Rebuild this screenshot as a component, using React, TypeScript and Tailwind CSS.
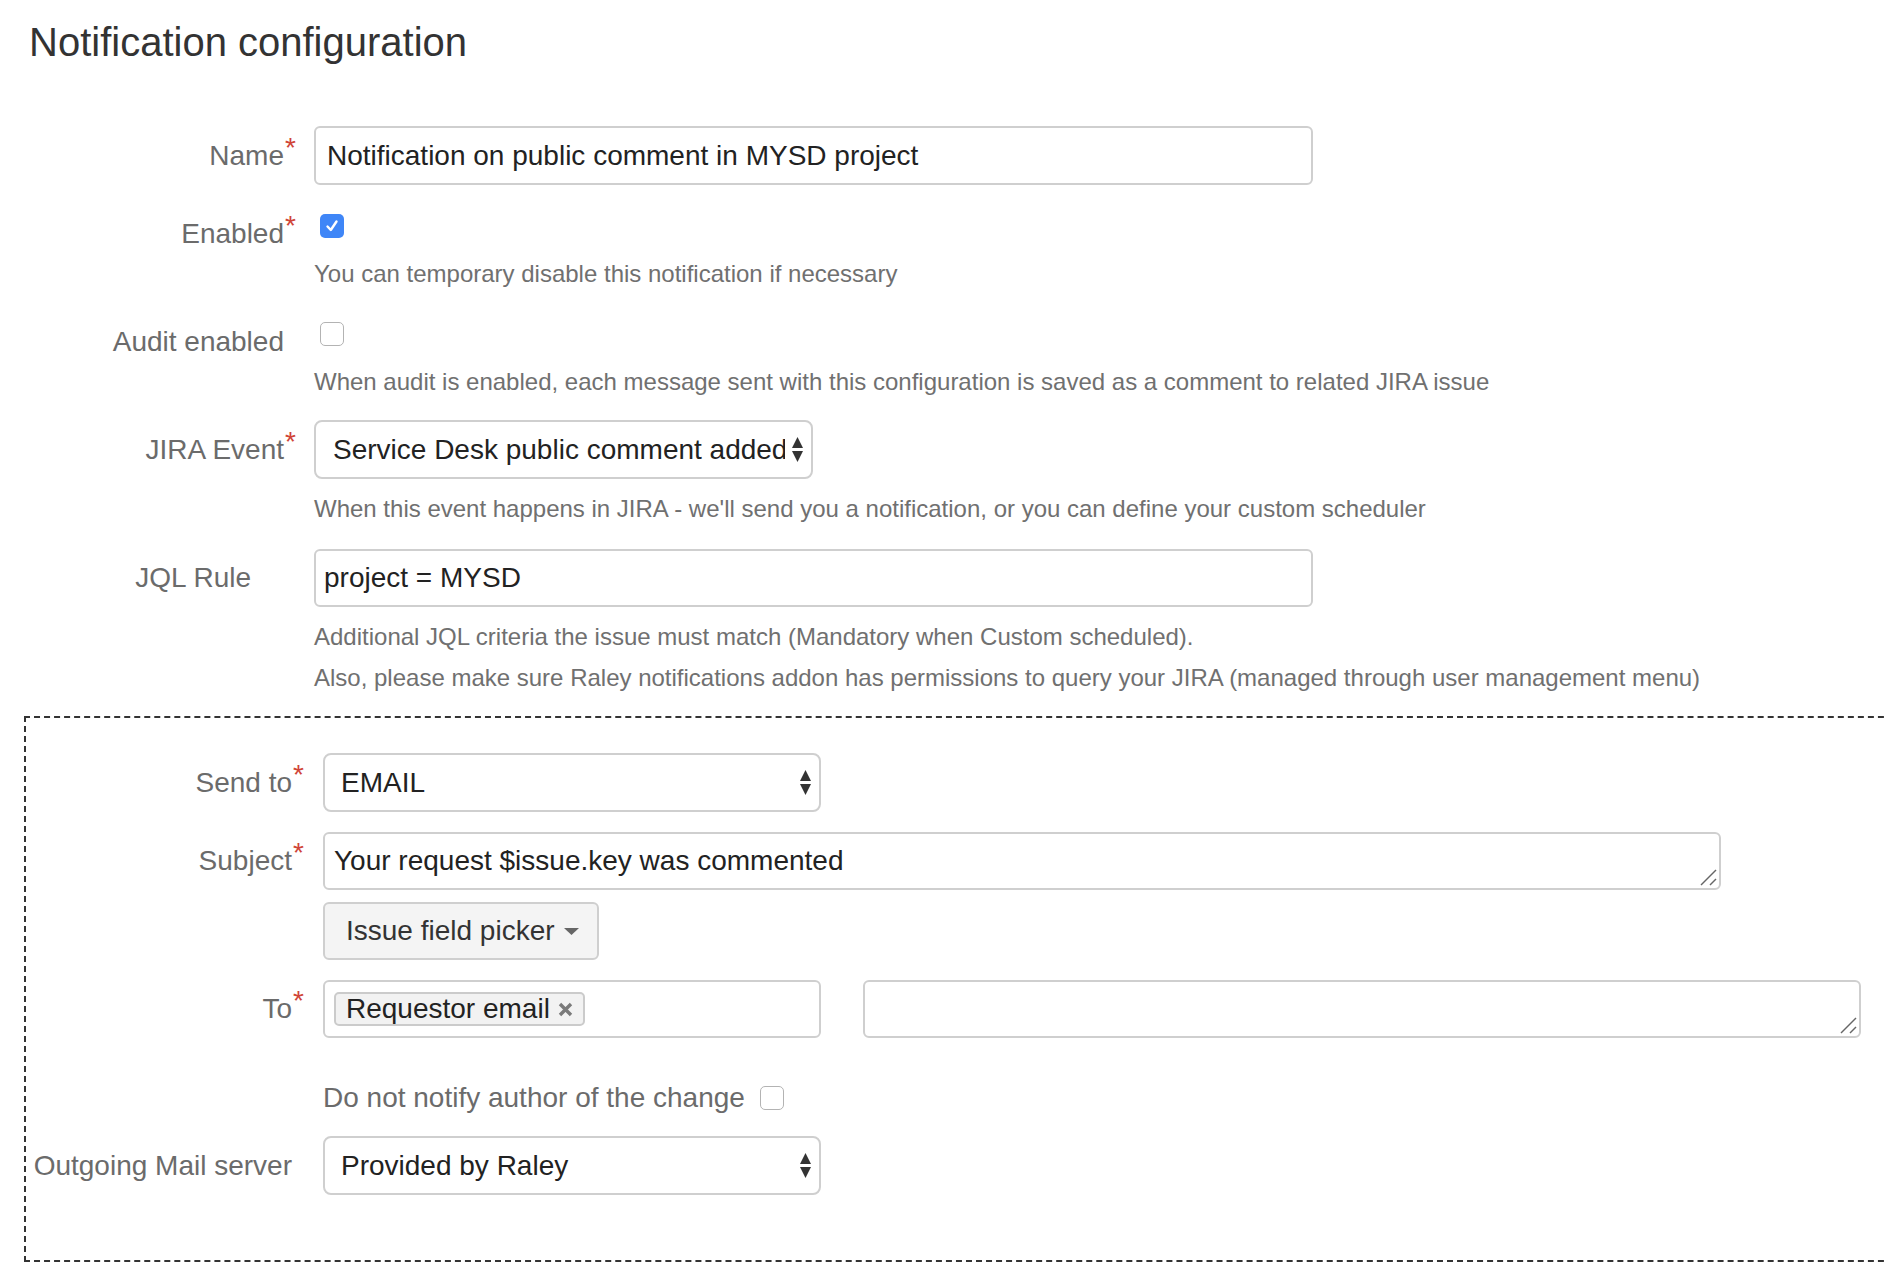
import React from "react";

function Asterisk() {
  return (
    <span className="absolute left-full top-[-5px] ml-[1px] text-[28px] leading-none text-[#d04437]">*</span>
  );
}

function Label({
  children,
  required,
  width,
  extra = "",
}: {
  children: React.ReactNode;
  required?: boolean;
  width: string;
  extra?: string;
}) {
  return (
    <div className={`${width} shrink-0 flex justify-end ${extra}`}>
      <span className="relative inline-block text-[28px] leading-[34px] text-[#6b6b6b] whitespace-nowrap">
        {children}
        {required && <Asterisk />}
      </span>
    </div>
  );
}

function Help({ children, extra = "" }: { children: React.ReactNode; extra?: string }) {
  return <div className={`text-[24px] leading-[34px] text-[#707070] whitespace-nowrap ${extra}`}>{children}</div>;
}

function SelectArrows() {
  return (
    <svg width="11" height="25" viewBox="0 0 11 25" className="shrink-0">
      <polygon points="0,11 5.5,0 11,11" fill="#333" />
      <polygon points="0,14 11,14 5.5,25" fill="#333" />
    </svg>
  );
}

function Select({
  value,
  width,
  padLeft,
  textWidth = "flex-1",
}: {
  value: string;
  width: string;
  padLeft: string;
  textWidth?: string;
}) {
  return (
    <div
      className={`${width} h-[59px] shrink-0 border-2 border-[#cfcfcf] rounded-[8px] bg-white flex items-center ${padLeft} pr-[8px]`}
    >
      <div className={`${textWidth} overflow-hidden whitespace-nowrap text-[28px] leading-[34px] text-[#222]`}>{value}</div>
      <div className="ml-auto flex">
        <SelectArrows />
      </div>
    </div>
  );
}

function ResizeHandle() {
  return (
    <svg width="18" height="18" viewBox="0 0 18 18" className="absolute right-[1px] bottom-[1px]">
      <line x1="1" y1="16" x2="16" y2="1" stroke="#666" strokeWidth="1.5" />
      <line x1="10" y1="16" x2="16" y2="10" stroke="#666" strokeWidth="1.5" />
    </svg>
  );
}

function Checkbox({ checked }: { checked?: boolean }) {
  if (checked) {
    return (
      <div className="w-[24px] h-[24px] rounded-[5px] bg-[#3f86f7] flex items-center justify-center">
        <svg width="16" height="16" viewBox="0 0 16 16">
          <path d="M3.5 8.5 L6.8 12 L12.5 3.5" stroke="white" strokeWidth="2.4" fill="none" strokeLinecap="round" strokeLinejoin="round" />
        </svg>
      </div>
    );
  }
  return <div className="w-[24px] h-[24px] rounded-[5px] bg-white border-[1.5px] border-[#b3b3b3]" />;
}

export default function App() {
  return (
    <div className="w-[1884px] h-[1270px] overflow-hidden bg-white font-['Liberation_Sans',Arial,sans-serif]">
      <div className="pt-[18px]">
        <div className="ml-[29px] text-[40px] leading-[48px] text-[#333]">Notification configuration</div>

        {/* Name */}
        <div className="mt-[60px] flex items-center h-[59px]">
          <Label width="w-[284px]" required>
            Name
          </Label>
          <div className="ml-[30px] w-[999px] h-[59px] border-2 border-[#cfcfcf] rounded-[6px] flex items-center px-[11px] text-[28px] leading-[34px] text-[#222] whitespace-nowrap">
            Notification on public comment in MYSD project
          </div>
        </div>

        {/* Enabled */}
        <div className="mt-[29px] flex items-start h-[24px]">
          <Label width="w-[284px]" required extra="pt-[3px]">
            Enabled
          </Label>
          <div className="ml-[36px]">
            <Checkbox checked />
          </div>
        </div>
        <Help extra="ml-[314px] mt-[19px]">You can temporary disable this notification if necessary</Help>

        {/* Audit */}
        <div className="mt-[31px] flex items-start h-[24px]">
          <Label width="w-[284px]" extra="pt-[3px]">
            Audit enabled
          </Label>
          <div className="ml-[36px]">
            <Checkbox />
          </div>
        </div>
        <Help extra="ml-[314px] mt-[19px]">
          When audit is enabled, each message sent with this configuration is saved as a comment to related JIRA issue
        </Help>

        {/* JIRA Event */}
        <div className="mt-[21px] flex items-center">
          <Label width="w-[284px]" required>
            JIRA Event
          </Label>
          <div className="ml-[30px]">
            <Select
              value="Service Desk public comment added"
              width="w-[499px]"
              padLeft="pl-[17px]"
              textWidth="w-[452px]"
            />
          </div>
        </div>
        <Help extra="ml-[314px] mt-[13px]">
          When this event happens in JIRA - we'll send you a notification, or you can define your custom scheduler
        </Help>

        {/* JQL */}
        <div className="mt-[23px] flex items-center">
          <Label width="w-[284px]" extra="pr-[33px]">
            JQL Rule
          </Label>
          <div className="ml-[30px] w-[999px] h-[58px] border-2 border-[#cfcfcf] rounded-[6px] flex items-center px-[8px] text-[28px] leading-[34px] text-[#222] whitespace-nowrap">
            project = MYSD
          </div>
        </div>
        <Help extra="ml-[314px] mt-[13px]">
          Additional JQL criteria the issue must match (Mandatory when Custom scheduled).
        </Help>
        <Help extra="ml-[314px] mt-[7px]">
          Also, please make sure Raley notifications addon has permissions to query your JIRA (managed through user
          management menu)
        </Help>

        {/* Dashed box */}
        <div className="mt-[21px] ml-[24px] w-[1900px] border-2 border-dashed border-[#333] pt-[35px] pb-[65px]">
          {/* Send to */}
          <div className="flex items-center">
            <Label width="w-[266px]" required>
              Send to
            </Label>
            <div className="ml-[31px]">
              <Select value="EMAIL" width="w-[498px]" padLeft="pl-[16px]" />
            </div>
          </div>

          {/* Subject */}
          <div className="mt-[20px] flex items-center">
            <Label width="w-[266px]" required>
              Subject
            </Label>
            <div className="relative ml-[31px] w-[1398px] h-[58px] border-2 border-[#cfcfcf] rounded-[6px] flex items-center px-[9px] text-[28px] leading-[34px] text-[#222] whitespace-nowrap">
              Your request $issue.key was commented
              <ResizeHandle />
            </div>
          </div>

          {/* Issue field picker */}
          <div className="mt-[12px] ml-[297px]">
            <div className="w-[276px] h-[58px] border-2 border-[#cfcfcf] rounded-[6px] bg-[#f4f4f4] flex items-center pl-[21px] text-[28px] leading-[34px] text-[#333] whitespace-nowrap">
              Issue field picker
              <svg width="15" height="7" viewBox="0 0 15 7" className="ml-[9px]">
                <polygon points="0,0 15,0 7.5,7" fill="#666" />
              </svg>
            </div>
          </div>

          {/* To */}
          <div className="mt-[20px] flex items-center">
            <Label width="w-[266px]" required>
              To
            </Label>
            <div className="ml-[31px] w-[498px] h-[58px] border-2 border-[#cfcfcf] rounded-[6px] flex items-center pl-[9px]">
              <div className="h-[34px] border-2 border-[#cbcbcb] rounded-[5px] bg-[#f2f2f2] flex items-center pl-[10px] pr-[10px] text-[28px] leading-[30px] text-[#222] whitespace-nowrap">
                Requestor email
                <svg width="15" height="15" viewBox="0 0 15 15" className="ml-[8px]">
                  <path d="M2 2 L13 13 M13 2 L2 13" stroke="#7a7a7a" strokeWidth="3.4" />
                </svg>
              </div>
            </div>
            <div className="relative ml-[42px] w-[998px] h-[58px] border-2 border-[#cfcfcf] rounded-[6px]">
              <ResizeHandle />
            </div>
          </div>

          {/* Do not notify */}
          <div className="mt-[43px] ml-[297px] flex items-center">
            <span className="text-[28px] leading-[34px] text-[#6b6b6b] whitespace-nowrap">Do not notify author of the change</span>
            <div className="ml-[15px]">
              <Checkbox />
            </div>
          </div>

          {/* Outgoing mail server */}
          <div className="mt-[21px] flex items-center">
            <Label width="w-[266px]">Outgoing Mail server</Label>
            <div className="ml-[31px]">
              <Select value="Provided by Raley" width="w-[498px]" padLeft="pl-[16px]" />
            </div>
          </div>
        </div>
      </div>
    </div>
  );
}
